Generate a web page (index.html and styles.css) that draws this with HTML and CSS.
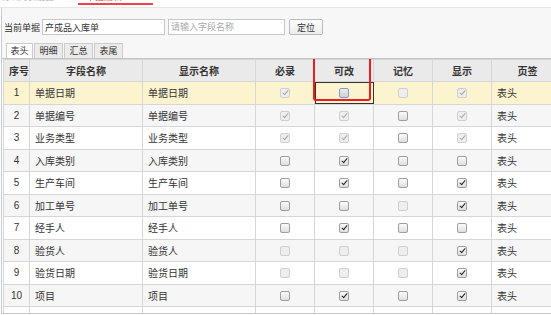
FILE: index.html
```html
<!DOCTYPE html>
<html lang="zh-CN">
<head>
    <meta charset="UTF-8">
    <title>单据编辑</title>
    <link rel="stylesheet" href="styles.css">
</head>
<body>
    <div class="topbar">
        <span class="tab-muted">明细列表设置</span>
        <span class="tab-active">单据编辑<i class="close">×</i></span>
    </div>
    <div class="panel">
        <div class="search">
            <label>当前单据</label>
            <input class="bill" type="text" value="产成品入库单">
            <input class="field" type="text" placeholder="请输入字段名称">
            <button class="locate">定位</button>
        </div>
        <div class="tabs">
            <span class="tab on">表头</span>
            <span class="tab">明细</span>
            <span class="tab">汇总</span>
            <span class="tab">表尾</span>
        </div>
    </div>
    <div class="grid-wrap">
        <table class="grid">
            <colgroup>
                <col style="width:26px"><col style="width:113px"><col style="width:113px">
                <col style="width:59px"><col style="width:59px"><col style="width:59px"><col style="width:59px"><col style="width:72px">
            </colgroup>
            <thead>
                <tr><th>序号</th><th>字段名称</th><th>显示名称</th><th>必录</th><th>可改</th><th>记忆</th><th>显示</th><th>页签</th></tr>
            </thead>
            <tbody>
                <tr class="cur">
                    <td class="no">1</td><td>单据日期</td><td>单据日期</td>
                    <td class="ck"><span class="cb dis on"></span></td>
                    <td class="ck sel"><span class="cb focus"></span></td>
                    <td class="ck"><span class="cb dis"></span></td>
                    <td class="ck"><span class="cb dis on"></span></td>
                    <td>表头</td>
                </tr>
                <tr>
                    <td class="no">2</td><td>单据编号</td><td>单据编号</td>
                    <td class="ck"><span class="cb dis on"></span></td>
                    <td class="ck"><span class="cb dis on"></span></td>
                    <td class="ck"><span class="cb"></span></td>
                    <td class="ck"><span class="cb dis on"></span></td>
                    <td>表头</td>
                </tr>
                <tr>
                    <td class="no">3</td><td>业务类型</td><td>业务类型</td>
                    <td class="ck"><span class="cb dis on"></span></td>
                    <td class="ck"><span class="cb dis on"></span></td>
                    <td class="ck"><span class="cb"></span></td>
                    <td class="ck"><span class="cb dis on"></span></td>
                    <td>表头</td>
                </tr>
                <tr>
                    <td class="no">4</td><td>入库类别</td><td>入库类别</td>
                    <td class="ck"><span class="cb"></span></td>
                    <td class="ck"><span class="cb on"></span></td>
                    <td class="ck"><span class="cb"></span></td>
                    <td class="ck"><span class="cb"></span></td>
                    <td>表头</td>
                </tr>
                <tr>
                    <td class="no">5</td><td>生产车间</td><td>生产车间</td>
                    <td class="ck"><span class="cb"></span></td>
                    <td class="ck"><span class="cb on"></span></td>
                    <td class="ck"><span class="cb"></span></td>
                    <td class="ck"><span class="cb on"></span></td>
                    <td>表头</td>
                </tr>
                <tr>
                    <td class="no">6</td><td>加工单号</td><td>加工单号</td>
                    <td class="ck"><span class="cb"></span></td>
                    <td class="ck"><span class="cb"></span></td>
                    <td class="ck"><span class="cb dis"></span></td>
                    <td class="ck"><span class="cb on"></span></td>
                    <td>表头</td>
                </tr>
                <tr>
                    <td class="no">7</td><td>经手人</td><td>经手人</td>
                    <td class="ck"><span class="cb"></span></td>
                    <td class="ck"><span class="cb on"></span></td>
                    <td class="ck"><span class="cb"></span></td>
                    <td class="ck"><span class="cb"></span></td>
                    <td>表头</td>
                </tr>
                <tr>
                    <td class="no">8</td><td>验货人</td><td>验货人</td>
                    <td class="ck"><span class="cb dis"></span></td>
                    <td class="ck"><span class="cb dis"></span></td>
                    <td class="ck"><span class="cb dis"></span></td>
                    <td class="ck"><span class="cb on"></span></td>
                    <td>表头</td>
                </tr>
                <tr>
                    <td class="no">9</td><td>验货日期</td><td>验货日期</td>
                    <td class="ck"><span class="cb dis"></span></td>
                    <td class="ck"><span class="cb dis"></span></td>
                    <td class="ck"><span class="cb dis"></span></td>
                    <td class="ck"><span class="cb on"></span></td>
                    <td>表头</td>
                </tr>
                <tr>
                    <td class="no">10</td><td>项目</td><td>项目</td>
                    <td class="ck"><span class="cb"></span></td>
                    <td class="ck"><span class="cb on"></span></td>
                    <td class="ck"><span class="cb"></span></td>
                    <td class="ck"><span class="cb on"></span></td>
                    <td>表头</td>
                </tr>
                <tr>
                    <td class="no"></td><td></td><td></td><td></td><td></td><td></td><td></td><td></td>
                </tr>
            </tbody>
        </table>
        <div class="mark"></div>
    </div>
</body>
</html>
```

FILE: styles.css
```css
body {
    margin: 0;
    padding: 0;
    width: 551px;
    height: 315px;
    overflow: hidden;
    background: #fff;
    font-family: "Liberation Sans", "Noto Sans CJK SC", sans-serif;
    color: #333;
}
.topbar {
    height: 7px;
    overflow: hidden;
    border-bottom: 1px solid #e6e6e6;
    position: relative;
    font-size: 9px;
    line-height: 12px;
}
.tab-muted {
    position: absolute;
    left: 0;
    top: -9px;
    color: #b8b8b8;
}
.tab-active {
    position: absolute;
    left: 78px;
    top: -8px;
    width: 75px;
    height: 13px;
    padding-left: 8px;
    box-sizing: border-box;
    color: #f0303a;
    border-bottom: 2px solid #f0404a;
    line-height: 10px;
}
.tab-active .close {
    font-style: normal;
    color: #ccc;
    margin-left: 14px;
}
.panel {
    background: #f7f7f7;
    border-left: 1px solid #c4ccd8;
    margin-left: 1px;
    padding-top: 11px;
}
.search {
    display: flex;
    align-items: center;
    height: 16px;
    font-size: 9px;
    padding-left: 2px;
}
.search label {
    width: 38px;
    color: #333;
}
.search input {
    height: 16px;
    box-sizing: border-box;
    border: 1px solid #c8c8c8;
    background: #fff;
    font-family: inherit;
    font-size: 9px;
    padding: 0 2px;
    margin: 0;
    color: #333;
    outline: none;
}
.search input::placeholder {
    color: #aaa;
}
.search .bill {
    width: 123px;
}
.search .field {
    width: 117px;
    margin-left: 3px;
}
.locate {
    width: 34px;
    height: 16px;
    margin-left: 4px;
    border: 1px solid #bbb;
    border-radius: 2px;
    background: linear-gradient(#fdfdfd, #ececec);
    font-family: inherit;
    font-size: 9px;
    color: #333;
    padding: 0;
}
.tabs {
    display: flex;
    gap: 1px;
    margin-top: 8px;
    padding-left: 4px;
    border-bottom: 1px solid #c4c4c4;
    height: 15px;
}
.tab {
    width: 29px;
    box-sizing: border-box;
    border: 1px solid #ccc;
    border-bottom: none;
    background: #ebebeb;
    font-size: 9px;
    line-height: 14px;
    text-align: center;
    color: #333;
}
.tab.on {
    width: 27px;
    background: #fff;
}
.grid-wrap {
    position: relative;
    height: 254px;
    overflow: hidden;
    border-bottom: 1px solid #c8c8c8;
    margin-left: 1px;
    border-left: 1px solid #c4ccd8;
    padding-left: 1px;
}
.grid {
    border-collapse: collapse;
    table-layout: fixed;
    width: 560px;
    font-size: 10px;
}
.grid th,
.grid td {
    border: 1px solid #d6d6d6;
    padding: 0 5px;
    white-space: nowrap;
    overflow: hidden;
}
.grid tbody tr {
    height: 22.5px;
}
.grid thead tr {
    height: 22px;
}
.grid th {
    background: #eaeaea;
    font-weight: bold;
    text-align: center;
    color: #333;
}
.grid tbody tr:nth-child(even) td {
    background: #f6f6f6;
}
.grid tr.cur td {
    background: #fcf4cf;
}
.grid td.no {
    text-align: center;
    padding: 0;
}
.grid td.ck {
    text-align: center;
    padding: 0;
}
.grid td.sel {
    outline: 1px solid #333;
    outline-offset: -1px;
}
.cb {
    display: inline-block;
    width: 10px;
    height: 10px;
    box-sizing: border-box;
    border: 1px solid #9e9e9e;
    border-radius: 2px;
    background: linear-gradient(#fafafa, #dedede);
    vertical-align: middle;
    position: relative;
}
.cb.on::after {
    content: "";
    position: absolute;
    left: 3px;
    top: 0;
    width: 2px;
    height: 5px;
    border-right: 1.5px solid #222;
    border-bottom: 1.5px solid #222;
    transform: rotate(40deg);
}
.cb.dis {
    border-color: #cfcfcf;
    background: #eeeeee;
}
.cb.dis.on::after {
    border-color: #a8a8a8;
}
.cb.focus {
    border-color: #7d9fd6;
    background: linear-gradient(#eaeaea, #cfcfcf);
}
.mark {
    position: absolute;
    left: 311px;
    top: -4px;
    width: 54px;
    height: 42px;
    border: 2px solid #f21b1b;
    border-radius: 3px;
}
```
